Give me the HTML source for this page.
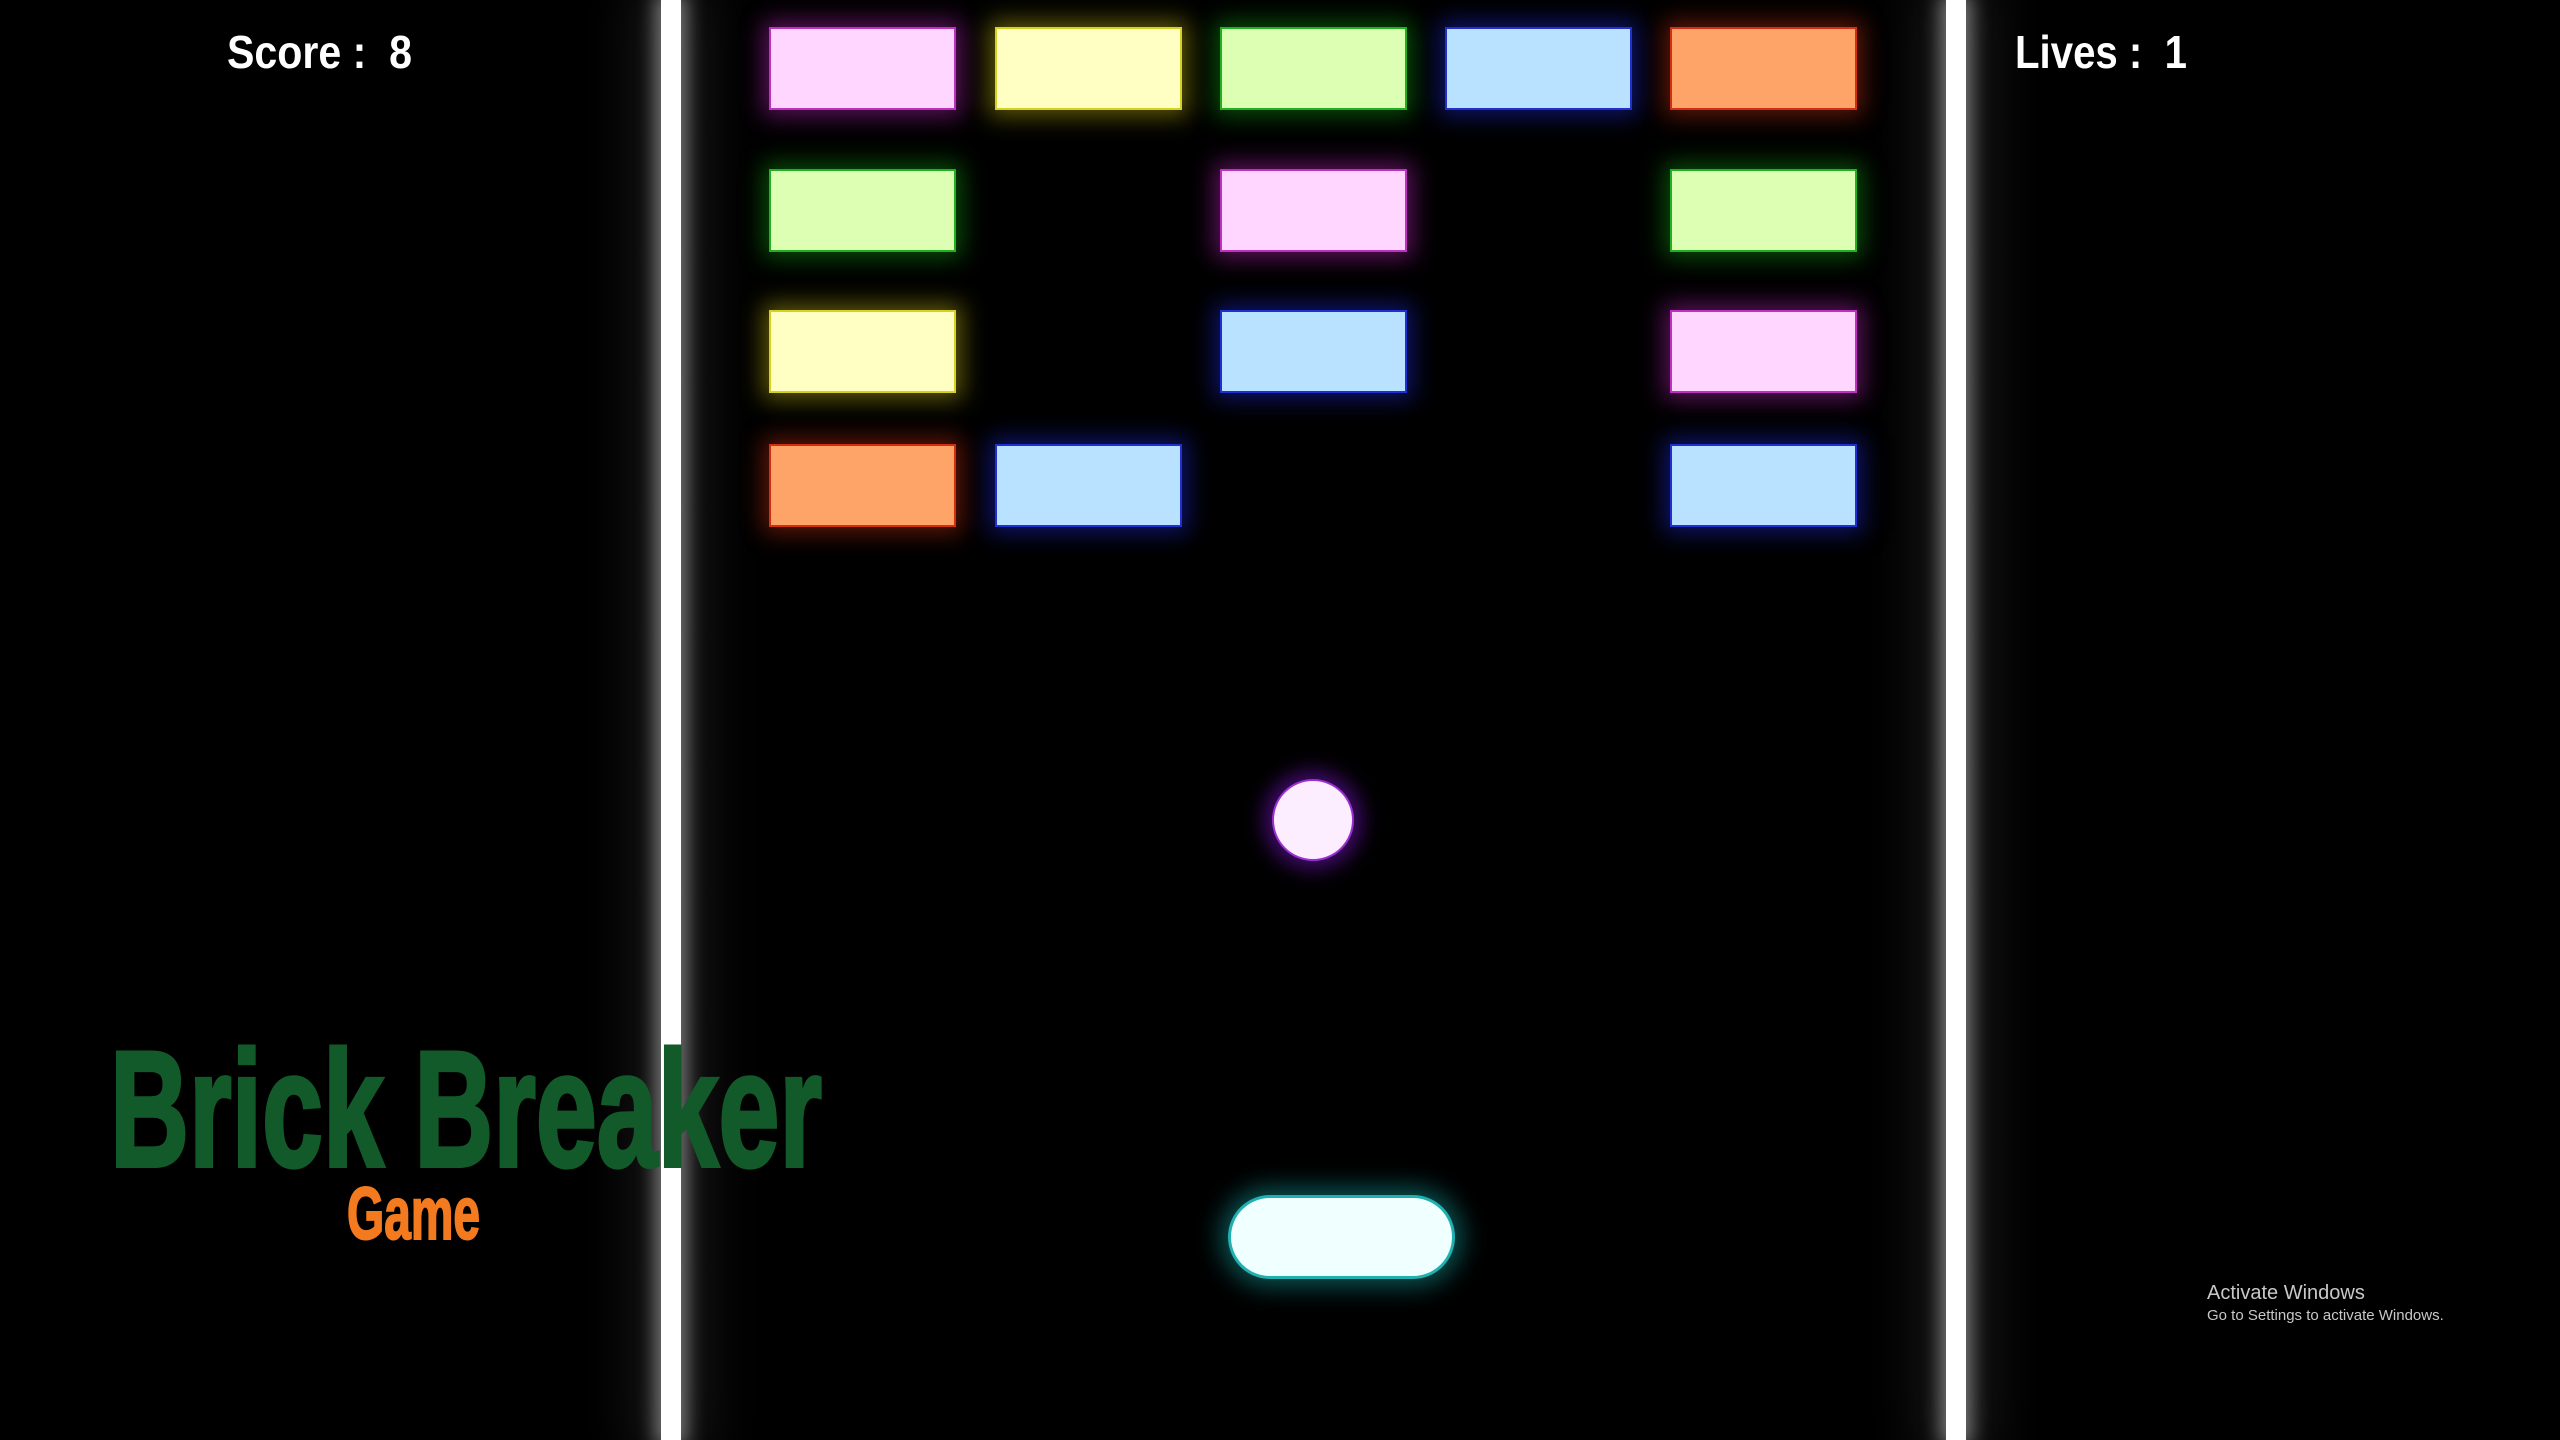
<!DOCTYPE html>
<html><head><meta charset="utf-8"><style>
html,body{margin:0;padding:0;background:#000;width:2560px;height:1440px;overflow:hidden}
body{position:relative;font-family:"Liberation Sans",sans-serif}
.wall{position:absolute;top:0;width:20px;height:1440px;background:#fff;box-shadow:0 0 18px 6px rgba(200,200,200,.55),0 0 60px 20px rgba(120,120,120,.25)}
.b{position:absolute;width:187px;height:83px;box-sizing:border-box;border:2px solid}
.pk{background:#ffd6ff;border-color:#c030c0;box-shadow:0 0 22px 6px rgba(200,40,200,.45)}
.yl{background:#ffffc4;border-color:#d8d020;box-shadow:0 0 22px 6px rgba(210,200,20,.45)}
.gr{background:#ddffb4;border-color:#20b020;box-shadow:0 0 22px 6px rgba(20,170,20,.45)}
.bl{background:#b8e2ff;border-color:#2030d0;box-shadow:0 0 22px 6px rgba(30,40,210,.5)}
.or{background:#ffa468;border-color:#d03010;box-shadow:0 0 22px 6px rgba(210,50,20,.45)}
</style></head><body>
<div class="wall" style="left:661px"></div>
<div class="wall" style="left:1946px"></div>

<div class="b pk" style="left:769px;top:27px"></div>
<div class="b yl" style="left:995px;top:27px"></div>
<div class="b gr" style="left:1220px;top:27px"></div>
<div class="b bl" style="left:1445px;top:27px"></div>
<div class="b or" style="left:1670px;top:27px"></div>

<div class="b gr" style="left:769px;top:169px"></div>
<div class="b pk" style="left:1220px;top:169px"></div>
<div class="b gr" style="left:1670px;top:169px"></div>

<div class="b yl" style="left:769px;top:310px"></div>
<div class="b bl" style="left:1220px;top:310px"></div>
<div class="b pk" style="left:1670px;top:310px"></div>

<div class="b or" style="left:769px;top:444px"></div>
<div class="b bl" style="left:995px;top:444px"></div>
<div class="b bl" style="left:1670px;top:444px"></div>

<div style="position:absolute;left:1272px;top:779px;width:82px;height:82px;border-radius:50%;background:#fdeeff;border:2px solid #9a30d0;box-sizing:border-box;box-shadow:0 0 20px 8px rgba(120,20,200,.55)"></div>

<div style="position:absolute;left:1228px;top:1195px;width:227px;height:84px;border-radius:42px;background:#f0ffff;border:3px solid #20b0b0;box-sizing:border-box;box-shadow:0 0 24px 8px rgba(20,160,160,.5)"></div>

<svg style="position:absolute;left:0;top:0" width="2560" height="1440">
<text x="227" y="68" font-family="Liberation Sans, sans-serif" font-weight="bold" font-size="46" fill="#fff" textLength="185" lengthAdjust="spacingAndGlyphs" xml:space="preserve">Score :  8</text>
<text x="2015" y="68" font-family="Liberation Sans, sans-serif" font-weight="bold" font-size="46" fill="#fff" textLength="172" lengthAdjust="spacingAndGlyphs" xml:space="preserve">Lives :  1</text>
<text x="110" y="1166" font-family="Liberation Sans Narrow, Liberation Sans, sans-serif" font-weight="bold" font-size="165" fill="#135a2a" stroke="#135a2a" stroke-width="4" textLength="712" lengthAdjust="spacingAndGlyphs">Brick Breaker</text>
<text x="347" y="1239" font-family="Liberation Sans Narrow, Liberation Sans, sans-serif" font-weight="bold" font-size="74" fill="#f47a20" stroke="#f47a20" stroke-width="2" textLength="133" lengthAdjust="spacingAndGlyphs">Game</text>
<text x="2207" y="1299" font-family="Liberation Sans, sans-serif" font-size="20" fill="#c8c8c8">Activate Windows</text>
<text x="2207" y="1320" font-family="Liberation Sans, sans-serif" font-size="15" fill="#c8c8c8">Go to Settings to activate Windows.</text>
</svg>
</body></html>
